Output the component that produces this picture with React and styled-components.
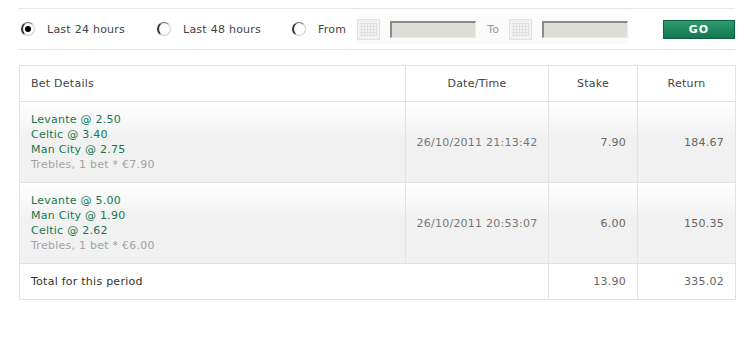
import React from 'react';
import styled, { createGlobalStyle } from 'styled-components';

const GlobalStyle = createGlobalStyle`
  body {
    margin: 0;
    background: #fff;
    font-family: "DejaVu Sans", Verdana, sans-serif;
    font-size: 11px;
    letter-spacing: 0.25px;
    color: #333;
  }
`;

const Page = styled.div`
  width: 717px;
  margin: 8px 0 0 18px;
`;

const FilterBar = styled.div`
  display: flex;
  align-items: center;
  height: 40px;
  border-top: 1px solid #e6e6e6;
  border-bottom: 1px solid #e6e6e6;
`;

const Option = styled.label`
  display: flex;
  align-items: center;
  width: ${p => p.width || 'auto'};
  margin-left: ${p => p.offset || 0};
  color: #444;
`;

const Radio = styled.span`
  position: relative;
  box-sizing: border-box;
  width: 14px;
  height: 14px;
  border-radius: 50%;
  border: 1px solid #d0d0d0;
  border-left: 2px solid #333;
  border-top-color: #777;
  background: radial-gradient(circle at 60% 60%, #fff 40%, #eee 100%);
  margin-right: 12px;
  &::after {
    content: '';
    display: ${p => (p.checked ? 'block' : 'none')};
    position: absolute;
    left: 2px;
    top: 3px;
    width: 6px;
    height: 6px;
    border-radius: 50%;
    background: #000;
  }
`;

const DateRange = styled.div`
  display: flex;
  align-items: center;
  background: #fbfbfb;
  padding: 4px 0;
  margin-left: 11px;
`;

const DateInput = styled.div`
  box-sizing: border-box;
  width: 86px;
  height: 17px;
  margin-left: 10px;
  background: #deded9;
  border-top: 2px solid #8a8a88;
  border-left: 2px solid #8a8a88;
  border-right: 1px solid #eaeae6;
  border-bottom: 1px solid #eaeae6;
`;

const ToLabel = styled.span`
  color: #999;
  margin: 0 10px 0 11px;
`;

const GoButton = styled.button`
  margin-left: auto;
  width: 72px;
  height: 19px;
  padding: 0;
  border: 1px solid #0f6143;
  background: linear-gradient(#2c9a6f, #147751);
  color: #fff;
  font-family: "DejaVu Sans", Verdana, sans-serif;
  font-weight: bold;
  font-size: 11px;
  letter-spacing: 1px;
`;

const Table = styled.table`
  margin-top: 15px;
  margin-left: 1px;
  border-collapse: collapse;
  table-layout: fixed;
  width: 716px;
`;

const Th = styled.th`
  height: 35px;
  padding: 0 11px;
  font-weight: normal;
  color: #444;
  text-align: ${p => p.align || 'center'};
  border: 1px solid #e3e3e3;
`;

const Row = styled.tr`
  background: ${p => (p.shaded ? 'linear-gradient(#ffffff, #f1f1f1 45%, #f1f1f1)' : '#fff')};
`;

const Td = styled.td`
  padding: ${p => p.pad || '10px 11px'};
  height: ${p => p.h || 'auto'};
  line-height: 15px;
  white-space: nowrap;
  text-align: ${p => p.align || 'left'};
  color: ${p => p.color || '#666'};
  border: 1px solid #e3e3e3;
  vertical-align: middle;
`;

const Selection = styled.div`
  color: #16774f;
`;

const Summary = styled.div`
  color: #a3a3a3;
`;

const Calendar = () => (
  <svg width="23" height="21" viewBox="0 0 23 21">
    <rect x="0.5" y="0.5" width="22" height="20" fill="#f2f2f2" stroke="#e2e2e2" />
    {[4, 7, 10, 13, 16].map(y => (
      <line key={'h' + y} x1="3" y1={y + 0.5} x2="20" y2={y + 0.5} stroke="#e0e0e0" />
    ))}
    {[4, 7, 10, 13, 16, 19].map(x => (
      <line key={'v' + x} x1={x + 0.5} y1="4" x2={x + 0.5} y2="17" stroke="#e0e0e0" />
    ))}
  </svg>
);

const bets = [
  {
    picks: ['Levante @ 2.50', 'Celtic @ 3.40', 'Man City @ 2.75'],
    note: 'Trebles, 1 bet * €7.90',
    date: '26/10/2011 21:13:42',
    stake: '7.90',
    ret: '184.67',
  },
  {
    picks: ['Levante @ 5.00', 'Man City @ 1.90', 'Celtic @ 2.62'],
    note: 'Trebles, 1 bet * €6.00',
    date: '26/10/2011 20:53:07',
    stake: '6.00',
    ret: '150.35',
  },
];

export default function App() {
  return (
    <Page>
      <GlobalStyle />
      <FilterBar>
        <Option width="136px" offset="3px">
          <Radio checked />
          Last 24 hours
        </Option>
        <Option width="135px">
          <Radio />
          Last 48 hours
        </Option>
        <Option>
          <Radio />
          From
        </Option>
        <DateRange>
          <Calendar />
          <DateInput />
          <ToLabel>To</ToLabel>
          <Calendar />
          <DateInput />
        </DateRange>
        <GoButton>GO</GoButton>
      </FilterBar>

      <Table>
        <colgroup>
          <col style={{ width: 386 }} />
          <col style={{ width: 143 }} />
          <col style={{ width: 89 }} />
          <col style={{ width: 98 }} />
        </colgroup>
        <thead>
          <tr>
            <Th align="left">Bet Details</Th>
            <Th>Date/Time</Th>
            <Th>Stake</Th>
            <Th>Return</Th>
          </tr>
        </thead>
        <tbody>
          {bets.map((bet, i) => (
            <Row shaded key={i}>
              <Td>
                {bet.picks.map(p => (
                  <Selection key={p}>{p}</Selection>
                ))}
                <Summary>{bet.note}</Summary>
              </Td>
              <Td align="center" color="#777" pad="10px 0">{bet.date}</Td>
              <Td align="right">{bet.stake}</Td>
              <Td align="right">{bet.ret}</Td>
            </Row>
          ))}
          <Row>
            <Td colSpan={2} color="#333" h="15px">Total for this period</Td>
            <Td align="right">13.90</Td>
            <Td align="right">335.02</Td>
          </Row>
        </tbody>
      </Table>
    </Page>
  );
}
